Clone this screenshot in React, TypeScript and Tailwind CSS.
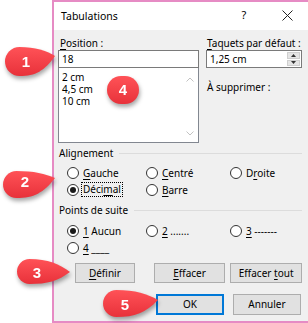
import React from "react";

function Radio({ checked = false }: { checked?: boolean }) {
  return (
    <span className="w-[12px] h-[12px] rounded-full border border-[#333333] bg-white flex items-center justify-center shrink-0">
      {checked && <span className="w-[6px] h-[6px] rounded-full bg-[#1a1a1a]" />}
    </span>
  );
}

function RadioItem({
  checked,
  children,
  w,
}: {
  checked?: boolean;
  children: React.ReactNode;
  w: string;
}) {
  return (
    <div className={`flex items-center gap-[4px] ${w}`}>
      <Radio checked={checked} />
      <span className="leading-[14px]">{children}</span>
    </div>
  );
}

function Callout({
  left,
  top,
  w,
  h,
  tipY,
  numX,
  numY,
  n,
  id,
}: {
  left: number;
  top: number;
  w: number;
  h: number;
  tipY: number;
  numX: number;
  numY: number;
  n: string;
  id: string;
}) {
  const r = h / 2;
  const body = w - r;
  const d = `M ${r} 0 C ${r + body * 0.45} 0, ${w - body * 0.25} ${tipY * 0.4}, ${w} ${tipY} C ${w - body * 0.3} ${tipY + (h - tipY) * 0.75}, ${r + body * 0.45} ${h}, ${r} ${h} A ${r} ${r} 0 0 1 ${r} 0 Z`;
  return (
    <div
      className="absolute drop-shadow-[1px_3px_2px_rgba(0,0,0,0.35)]"
      style={{ left, top, width: w, height: h }}
    >
      <svg width={w} height={h} viewBox={`0 0 ${w} ${h}`} className="absolute left-0 top-0">
        <defs>
          <linearGradient id={id} x1="0" y1="0" x2="0" y2="1">
            <stop offset="0" stopColor="#ff5257" />
            <stop offset="1" stopColor="#e8313a" />
          </linearGradient>
        </defs>
        <path d={d} fill={`url(#${id})`} />
      </svg>
      <span
        className="absolute text-white font-bold text-[15px] leading-[16px] font-['Liberation_Sans',Arial,sans-serif]"
        style={{ left: numX - left - 5, top: numY - top - 8, width: 10, textAlign: "center" }}
      >
        {n}
      </span>
    </div>
  );
}

export default function App() {
  return (
    <div className="relative w-[308px] h-[323px] overflow-hidden bg-white font-['Noto_Sans',sans-serif] text-[10px] text-black">
      <div className="ml-[52px] w-[264px] h-[323px] border-l-2 border-t-2 border-b-2 border-[#e68bc4] flex flex-col bg-[#f0f0f0]">
        {/* Title bar */}
        <div className="h-[28px] bg-white flex items-center shrink-0">
          <span className="w-[184px] pl-[7px] text-[10.5px] leading-[14px]">Tabulations</span>
          <span className="w-[12px] text-center text-[11px] leading-[14px] -mt-[2px]">?</span>
          <span className="ml-[32px] -mt-[2px]">
            <svg width="11" height="11" viewBox="0 0 11 11">
              <path d="M0.5 0.5 L10.5 10.5 M10.5 0.5 L0.5 10.5" stroke="#222" strokeWidth="1" />
            </svg>
          </span>
        </div>

        {/* Body */}
        <div className="pl-[4px] pt-[6px] w-[248px] flex flex-col">
          <div className="flex">
            <div className="w-[141px] flex flex-col">
              <div className="h-[14px] leading-[14px] pl-[2px]">
                <span className="underline underline-offset-[2px]">P</span>osition :
              </div>
              <div className="h-[18px] border border-[#7a7a7a] bg-white pl-[3px] leading-[16px]">18</div>
              <div className="h-[75px] border border-[#828790] border-t-0 bg-white flex">
                <div className="flex-1 pl-[3px] pt-[3px] flex flex-col">
                  <div className="h-[12px] leading-[12px]">2 cm</div>
                  <div className="h-[12px] leading-[12px]">4,5 cm</div>
                  <div className="h-[12px] leading-[12px]">10 cm</div>
                </div>
                <div className="w-[17px] flex flex-col items-center justify-between pt-[9px] pb-[6px]">
                  <svg width="8" height="5" viewBox="0 0 8 5">
                    <path d="M0.5 4.5 L4 1 L7.5 4.5" fill="none" stroke="#c2c2c2" strokeWidth="1" />
                  </svg>
                  <svg width="8" height="5" viewBox="0 0 8 5">
                    <path d="M0.5 0.5 L4 4 L7.5 0.5" fill="none" stroke="#c2c2c2" strokeWidth="1" />
                  </svg>
                </div>
              </div>
            </div>
            <div className="ml-[7px] w-[96px] flex flex-col">
              <div className="h-[14px] leading-[14px] pl-[1px]">
                <span className="underline underline-offset-[2px]">T</span>aquets par défaut :
              </div>
              <div className="h-[18px] border border-[#7a7a7a] bg-white flex">
                <span className="flex-1 pl-[3px] leading-[16px]">1,25 cm</span>
                <div className="w-[13px] flex flex-col m-[1px] gap-[1px]">
                  <div className="flex-1 bg-[#e5e5e5] border border-[#cfcfcf] flex items-center justify-center">
                    <svg width="5" height="3" viewBox="0 0 5 3">
                      <path d="M0 3 L2.5 0 L5 3 Z" fill="#333" />
                    </svg>
                  </div>
                  <div className="flex-1 bg-[#e5e5e5] border border-[#cfcfcf] flex items-center justify-center">
                    <svg width="5" height="3" viewBox="0 0 5 3">
                      <path d="M0 0 L2.5 3 L5 0 Z" fill="#333" />
                    </svg>
                  </div>
                </div>
              </div>
              <div className="mt-[12px] h-[14px] leading-[14px] pl-[1px]">À supprimer :</div>
            </div>
          </div>

          {/* Alignement */}
          <div className="mt-[3px] h-[14px] flex items-center">
            <span className="pl-[1px] leading-[14px]">Alignement</span>
            <span className="flex-1 h-px bg-[#dcdcdc] ml-[6px]" />
          </div>
          <div className="mt-[4px] pl-[9px] flex flex-col">
            <div className="h-[17px] flex items-center">
              <RadioItem w="w-[79px]">
                <span className="underline underline-offset-[2px]">G</span>auche
              </RadioItem>
              <RadioItem w="w-[84px]">
                <span className="underline underline-offset-[2px]">C</span>entré
              </RadioItem>
              <RadioItem w="w-[70px]">
                D<span className="underline underline-offset-[2px]">r</span>oite
              </RadioItem>
            </div>
            <div className="h-[17px] flex items-center">
              <div className="flex items-center gap-[2px] w-[79px]">
                <Radio checked />
                <span className="leading-[13px] border border-dotted border-black px-[1px]">
                  Déci<span className="underline underline-offset-[2px]">m</span>al
                </span>
              </div>
              <RadioItem w="w-[84px]">
                <span className="underline underline-offset-[2px]">B</span>arre
              </RadioItem>
            </div>
          </div>

          {/* Points de suite */}
          <div className="mt-[5px] h-[14px] flex items-center">
            <span className="pl-[1px] leading-[14px]">Points de suite</span>
            <span className="flex-1 h-px bg-[#dcdcdc] ml-[6px]" />
          </div>
          <div className="mt-[5px] pl-[9px] flex flex-col">
            <div className="h-[17px] flex items-center">
              <RadioItem checked w="w-[79px]">
                <span className="underline underline-offset-[2px]">1</span> Aucun
              </RadioItem>
              <RadioItem w="w-[84px]">
                <span className="underline underline-offset-[2px]">2</span> .......
              </RadioItem>
              <RadioItem w="w-[70px]">
                <span className="underline underline-offset-[2px]">3</span> -------
              </RadioItem>
            </div>
            <div className="h-[17px] flex items-center">
              <RadioItem w="w-[79px]">
                <span className="underline underline-offset-[2px]">4</span> ____
              </RadioItem>
            </div>
          </div>

          {/* Buttons */}
          <div className="mt-[7px] h-[20px] flex">
            <div className="ml-[17px] w-[60px] h-[20px] bg-[#e1e1e1] border border-[#adadad] flex items-center justify-center">
              <span>
                <span className="underline underline-offset-[2px]">D</span>éfinir
              </span>
            </div>
            <div className="ml-[19px] w-[72px] h-[20px] bg-[#e1e1e1] border border-[#adadad] flex items-center justify-center">
              <span>
                <span className="underline underline-offset-[2px]">E</span>ffacer
              </span>
            </div>
            <div className="ml-[5px] w-[72px] h-[20px] bg-[#e1e1e1] border border-[#adadad] flex items-center justify-center">
              <span>
                Effacer <span className="underline underline-offset-[2px]">t</span>out
              </span>
            </div>
          </div>
          <div className="mt-[11px] h-[21px] flex">
            <div className="ml-[98px] w-[68px] h-[21px] bg-[#e1e1e1] border border-[#0078d7] shadow-[inset_0_0_0_1px_#0078d7] flex items-center justify-center">
              OK
            </div>
            <div className="ml-[9px] w-[68px] h-[21px] bg-[#e1e1e1] border border-[#adadad] flex items-center justify-center">
              Annuler
            </div>
          </div>
        </div>
      </div>

      <Callout id="g1" left={5} top={47} w={50} h={29} tipY={9} numX={26} numY={62} n="1" />
      <Callout id="g2" left={3} top={171} w={52} h={27} tipY={7} numX={25} numY={182} n="2" />
      <Callout id="g3" left={17} top={259} w={53} h={25} tipY={13} numX={37} numY={273} n="3" />
      <Callout id="g5" left={103} top={290} w={55} h={27} tipY={10} numX={125} numY={305} n="5" />
      <div className="absolute left-[107px] top-[76px] w-[32px] h-[28px] rounded-full bg-gradient-to-b from-[#ff5257] to-[#e8313a] drop-shadow-[1px_3px_2px_rgba(0,0,0,0.35)] flex items-center justify-center">
        <span className="text-white font-bold text-[15px] leading-[16px] font-['Liberation_Sans',Arial,sans-serif]">4</span>
      </div>
    </div>
  );
}
